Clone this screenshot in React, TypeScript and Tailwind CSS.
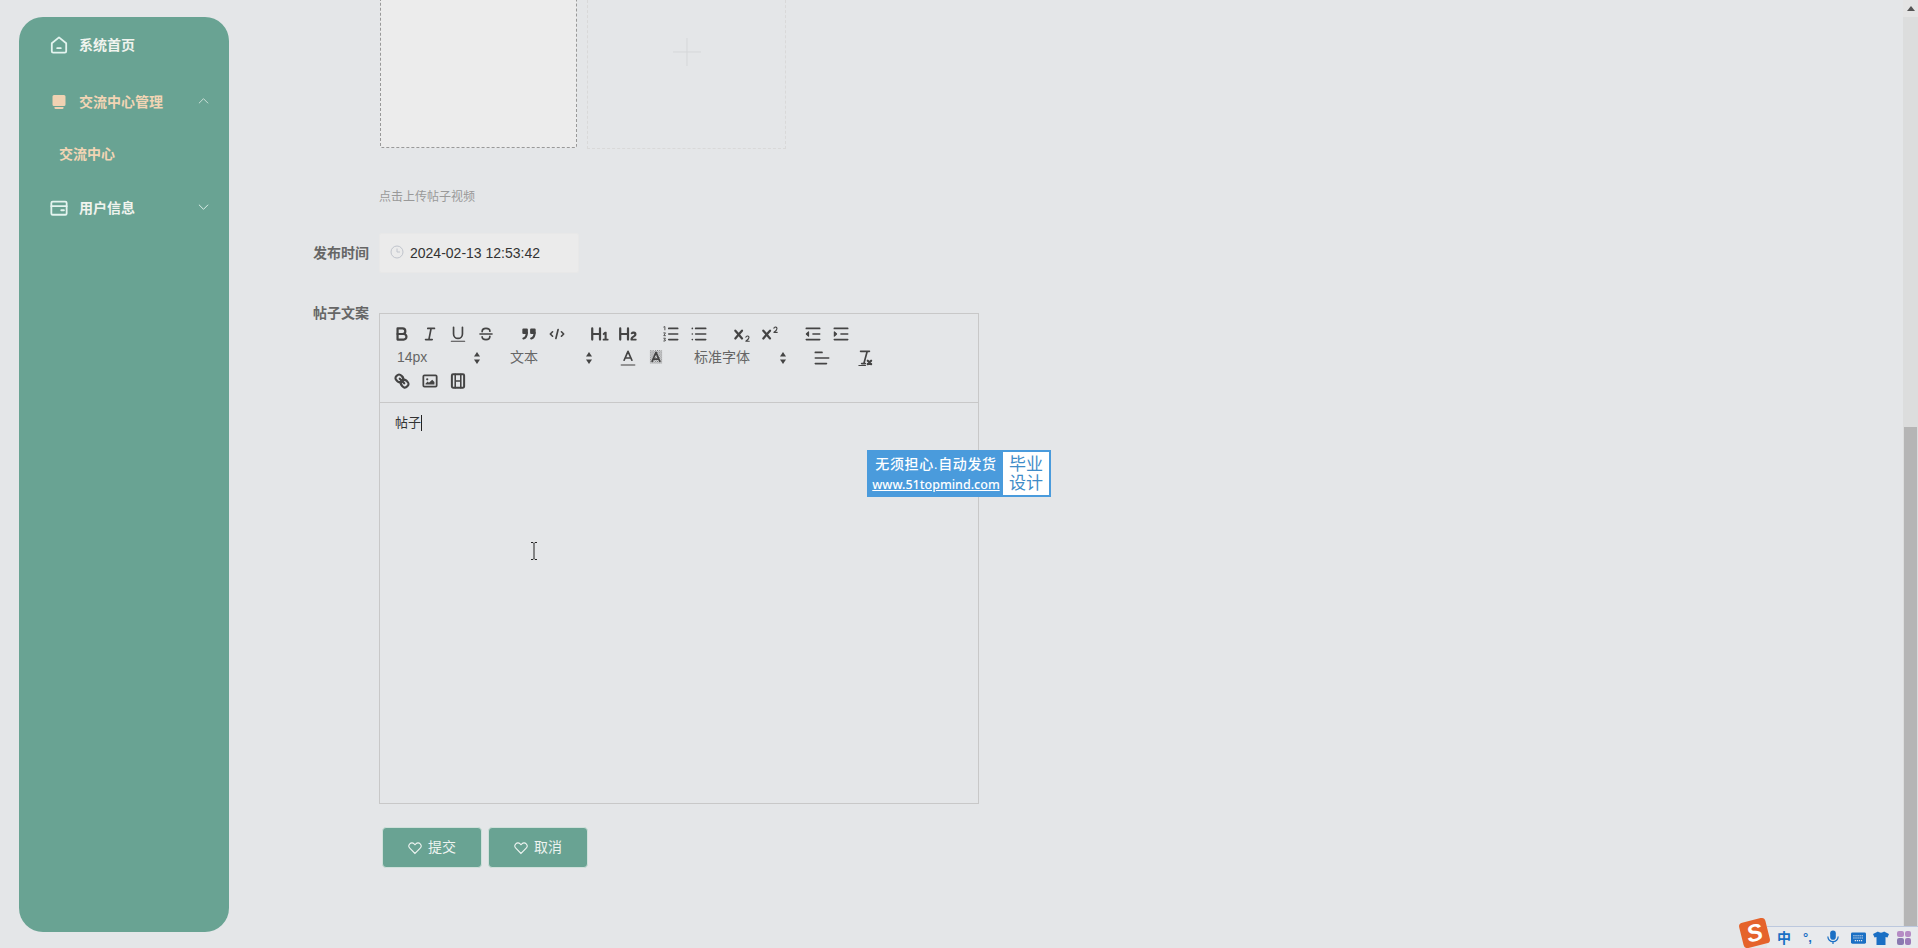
import type { ReactNode } from 'react';

function QlIcon({ children }: { children: ReactNode }) {
    return (
        <span className="w-[28px] h-[24px] flex items-center justify-center shrink-0">
            <svg viewBox="0 0 18 18" className="w-[20px] h-[20px]" fill="none" stroke="#444" strokeWidth="2" strokeLinecap="round" strokeLinejoin="round">
                {children}
            </svg>
        </span>
    );
}

const thin = { strokeWidth: 1.5 };

function ToolbarGroup({ children }: { children: ReactNode }) {
    return <div className="flex mr-[15px]">{children}</div>;
}

function Picker({ label, className }: { label: string; className: string }) {
    return (
        <div className={`flex items-center justify-between h-[24px] text-[14px] text-[#666] ${className}`}>
            <span>{label}</span>
            <svg viewBox="0 0 8 14" className="w-[8px] h-[14px]" fill="#444">
                <path d="M4 1 7 5.500H1Z" />
                <path d="M4 13 1 8.500h6Z" />
            </svg>
        </div>
    );
}

function Toolbar() {
    return (
        <div className="h-[89px] pt-[8px] pl-[8px] border-b border-[#c8c8c8]">
            <div className="flex h-[24.5px]">
                <ToolbarGroup>
                    <QlIcon>
                        <path d="M5,4H9.5A2.5,2.5,0,0,1,12,6.5v0A2.5,2.5,0,0,1,9.5,9H5A0,0,0,0,1,5,9V4A0,0,0,0,1,5,4Z" />
                        <path d="M5,9h5.5A2.5,2.5,0,0,1,13,11.5v0A2.5,2.5,0,0,1,10.5,14H5a0,0,0,0,1,0,0V9A0,0,0,0,1,5,9Z" />
                    </QlIcon>
                    <QlIcon>
                        <path d="M7 4h6M5 14h6M8 14l2-10" {...thin} />
                    </QlIcon>
                    <QlIcon>
                        <path d="M5,3V9a4,4,0,0,0,4,4H9a4,4,0,0,0,4-4V3" {...thin} />
                        <path d="M3 15.500h12" strokeWidth="1" />
                    </QlIcon>
                    <QlIcon>
                        <path d="M3.500 9h11" strokeWidth="1.200" />
                        <path d="M5.500 7C5.500 5 7 4 9 4s3.500 1 3.500 2.500M12.500 11c0 2-1.500 3-3.500 3s-3.500-1-3.500-2.500" {...thin} />
                    </QlIcon>
                </ToolbarGroup>
                <ToolbarGroup>
                    <QlIcon>
                        <rect x="4" y="5" width="3" height="3" fill="#444" />
                        <rect x="11" y="5" width="3" height="3" fill="#444" />
                        <path d="M7,8c0,4.031-3,5-3,5M14,8c0,4.031-3,5-3,5" />
                    </QlIcon>
                    <QlIcon>
                        <path d="M5 7 3 9l2 2M13 7l2 2-2 2M10 5 8 13" {...thin} />
                    </QlIcon>
                </ToolbarGroup>
                <ToolbarGroup>
                    <QlIcon>
                        <path fill="#444" stroke="none" d="M10,4V14a1,1,0,0,1-2,0V10H3v4a1,1,0,0,1-2,0V4A1,1,0,0,1,3,4V8H8V4a1,1,0,0,1,2,0Zm6.06787,9.209H14.98975V7.59863a.54085.54085,0,0,0-.605-.60547h-.62744a1.01119,1.01119,0,0,0-.748.29688L11.645,8.56641a.5435.5435,0,0,0-.022.8584l.28613.30762a.53861.53861,0,0,0,.84717.0332l.09912-.08789a1.2137,1.2137,0,0,0,.2417-.35254h.02246s-.01123.30859-.01123.60547V13.209H12.041a.54085.54085,0,0,0-.605.60547v.43945a.54085.54085,0,0,0,.605.60547h4.02686a.54085.54085,0,0,0,.605-.60547v-.43945A.54085.54085,0,0,0,16.06787,13.209Z" />
                    </QlIcon>
                    <QlIcon>
                        <path fill="#444" stroke="none" d="M16.73975,13.81445v.43945a.54085.54085,0,0,1-.605.60547H11.855a.58392.58392,0,0,1-.64893-.60547V14.0127c0-2.90527,3.39941-3.42187,3.39941-4.55469a.77675.77675,0,0,0-.84717-.78125,1.17684,1.17684,0,0,0-.83594.38477c-.2749.26367-.561.374-.85791.13184l-.4292-.34082c-.30811-.24219-.38525-.51758-.1543-.81445a2.97155,2.97155,0,0,1,2.45361-1.17676,2.45393,2.45393,0,0,1,2.68408,2.40918c0,2.45312-3.1792,2.92676-3.27832,3.93848h2.79443A.54085.54085,0,0,1,16.73975,13.81445ZM9,3A.99974.99974,0,0,0,8,4V8H3V4A1,1,0,0,0,1,4V14a1,1,0,0,0,2,0V10H8v4a1,1,0,0,0,2,0V4A.99974.99974,0,0,0,9,3Z" />
                    </QlIcon>
                </ToolbarGroup>
                <ToolbarGroup>
                    <QlIcon>
                        <path d="M7 4h8M7 9h8M7 14h8" {...thin} />
                        <path d="M2.500 2.700 3.500 2.300v3M2.500 8h1.500L2.500 10.500H4M2.500 12.800H4L3 14l1 .3-.3 1H2.500" strokeWidth="0.8" />
                    </QlIcon>
                    <QlIcon>
                        <path d="M6 4h9M6 9h9M6 14h9M3 4h0M3 9h0M3 14h0" {...thin} />
                    </QlIcon>
                </ToolbarGroup>
                <ToolbarGroup>
                    <QlIcon>
                        <path fill="#444" stroke="none" d="M15.5,15H13.861a3.858,3.858,0,0,0,1.914-2.975,1.8,1.8,0,0,0-1.6-1.751A1.921,1.921,0,0,0,12.021,11.7a0.50013,0.50013,0,1,0,.957.291h0a0.914,0.914,0,0,1,1.053-.725,0.81,0.81,0,0,1,.744.762c0,1.076-1.16971,1.86982-1.93971,2.43082A1.45639,1.45639,0,0,0,12,15.5a0.5,0.5,0,0,0,.5.5h3A0.5,0.5,0,0,0,15.5,15Z" />
                        <path fill="#444" stroke="none" d="M9.65,5.241a1,1,0,0,0-1.409.108L6,7.964,3.759,5.349A1,1,0,0,0,2.192,6.59178Q2.215,6.621,2.241,6.651L4.684,9.5,2.241,12.35A1,1,0,0,0,3.71,13.70722q0.02739-.02972.05-0.058L6,11.036,8.241,13.65a1,1,0,1,0,1.567-1.24277Q9.78255,12.375,9.759,12.35L7.316,9.5,9.759,6.651A1,1,0,0,0,9.65,5.241Z" />
                    </QlIcon>
                    <QlIcon>
                        <path fill="#444" stroke="none" d="M15.5,7H13.861a4.015,4.015,0,0,0,1.914-2.975,1.8,1.8,0,0,0-1.6-1.751A1.922,1.922,0,0,0,12.021,3.7a0.5,0.5,0,1,0,.957.291,0.917,0.917,0,0,1,1.053-.725,0.81,0.81,0,0,1,.744.762c0,1.077-1.164,1.925-1.934,2.486A1.423,1.423,0,0,0,12,7.5a0.5,0.5,0,0,0,.5.5h3A0.5,0.5,0,0,0,15.5,7Z" />
                        <path fill="#444" stroke="none" d="M9.651,5.241a1,1,0,0,0-1.41.108L6,7.964,3.759,5.349a1,1,0,1,0-1.519,1.3L4.683,9.5,2.241,12.35a1,1,0,1,0,1.519,1.3L6,11.036l2.241,2.616a1,1,0,0,0,1.519-1.3L7.317,9.5,9.759,6.651A1,1,0,0,0,9.651,5.241Z" />
                    </QlIcon>
                </ToolbarGroup>
                <ToolbarGroup>
                    <QlIcon>
                        <path d="M3 14h12M3 4h12M9 9h6" {...thin} />
                        <path d="M5 7v4L3 9Z" fill="#444" strokeWidth="1" />
                    </QlIcon>
                    <QlIcon>
                        <path d="M3 14h12M3 4h12M9 9h6" {...thin} />
                        <path d="M3 7v4l2-2Z" fill="#444" strokeWidth="1" />
                    </QlIcon>
                </ToolbarGroup>
            </div>
            <div className="flex h-[24.5px] -mt-px">
                <Picker label="14px" className="w-[101px] pl-[9px] pr-[8px] mr-[9px]" />
                <Picker label="文本" className="w-[101px] pl-[12px] pr-[6px] mr-[15px]" />
                <QlIcon>
                    <path d="M5.500 11 9 3l3.500 8M11.630 9H6.380" {...thin} />
                    <path d="M3 15.300h12" strokeWidth="1.400" stroke="#777" />
                </QlIcon>
                <QlIcon>
                    <defs>
                        <pattern id="hatch" width="2" height="2" patternUnits="userSpaceOnUse">
                            <rect width="0.8" height="0.8" fill="#555" stroke="none" />
                            <rect x="1" y="1" width="0.8" height="0.8" fill="#555" stroke="none" />
                        </pattern>
                    </defs>
                    <rect x="3.500" y="2" width="11" height="12" fill="url(#hatch)" stroke="none" />
                    <path d="M5.500 12 9 4l3.500 8M11.630 10H6.380" {...thin} />
                </QlIcon>
                <Picker label="标准字体" className="w-[110px] ml-[15px] pl-[9px] pr-[8px] mr-[13px]" />
                <QlIcon>
                    <path d="M3 4h6M3 9h12M3 14h10" {...thin} />
                </QlIcon>
                <div className="w-[15px]" />
                <QlIcon>
                    <path d="M5 3h8M6 14h3.300M11 3 8 14" {...thin} />
                    <path d="M3.500 15.800h6" strokeWidth="1" />
                    <path d="M11.500 11.500l3 3M14.500 11.500l-3 3" />
                </QlIcon>
            </div>
            <div className="flex h-[24.5px] -mt-px">
                <QlIcon>
                    <path d="M7 7l4 4" />
                    <path d="M8.9,4.577a3.476,3.476,0,0,1,.36,4.679A3.476,3.476,0,0,1,4.577,8.9C3.185,7.5,2.035,6.4,4.217,4.217S7.5,3.185,8.9,4.577Z" />
                    <path d="M13.423,9.1a3.476,3.476,0,0,0-4.679-.36,3.476,3.476,0,0,0,.36,4.679c1.392,1.392,2.5,2.542,4.679.36S14.815,10.5,13.423,9.1Z" />
                </QlIcon>
                <QlIcon>
                    <rect x="3" y="4" width="12" height="10" rx="1" strokeWidth="1.600" />
                    <circle cx="6.500" cy="7.500" r="1" fill="#444" stroke="none" />
                    <path d="M5 12.200v-1l2-1.700 1 1 3-2.700 2 2v2.400Z" fill="#444" stroke="none" />
                </QlIcon>
                <QlIcon>
                    <rect x="3.500" y="3" width="11" height="12" rx="1" strokeWidth="1.800" />
                    <path d="M6.500 3v12M11.500 3v12M6.500 9h5" strokeWidth="1.400" />
                </QlIcon>
            </div>
        </div>
    );
}

function Sidebar() {
    return (
        <aside className="w-[210px] h-[915px] ml-[19px] mt-[17px] rounded-[24px] bg-[#69a393] shrink-0 text-[14px] font-bold">
            <div className="h-[56px] pl-[31px] flex items-center text-[#f0f3ee]">
                <svg viewBox="0 0 20 20" className="w-[18px] h-[18px] mr-[11px]" fill="none" stroke="#e4f4ef" strokeWidth="2" strokeLinejoin="round" strokeLinecap="round">
                    <path d="M2 8 10 1.500 18 8v9a1.500 1.500 0 0 1-1.500 1.500h-13A1.500 1.500 0 0 1 2 17Z" />
                    <path d="M8 13.500h4" />
                </svg>
                系统首页
            </div>
            <div className="h-[58px] pl-[31px] pr-[20px] flex items-center text-[#f2d5b5]">
                <svg viewBox="0 0 18 18" className="w-[18px] h-[18px] mr-[11px]" fill="#f0d2b2">
                    <path d="M4 2h10a1.500 1.500 0 0 1 1.500 1.500v8A1.500 1.500 0 0 1 14 13H4A1.500 1.500 0 0 1 2.500 11.500v-8A1.500 1.500 0 0 1 4 2Z" />
                    <path d="M4.500 14h9v1a1 1 0 0 1-1 1h-7a1 1 0 0 1-1-1Z" />
                </svg>
                <span className="flex-1">交流中心管理</span>
                <svg viewBox="0 0 12 8" className="w-[11px] h-[8px] -mt-[3px]" fill="none" stroke="#d5e5dd" strokeWidth="1">
                    <path d="M1 6.500 6 1.500l5 5" />
                </svg>
            </div>
            <div className="h-[46px] pl-[40px] flex items-center text-[#f2d5b5]">交流中心</div>
            <div className="h-[62px] pl-[31px] pr-[20px] flex items-center text-[#f0f3ee]">
                <svg viewBox="0 0 20 20" className="w-[18px] h-[18px] mr-[11px]" fill="none" stroke="#e4f4ef" strokeWidth="2" strokeLinecap="round">
                    <rect x="1.500" y="3" width="17" height="14.500" rx="1.500" />
                    <path d="M1.500 8h17M12.500 12.500h3" />
                </svg>
                <span className="flex-1">用户信息</span>
                <svg viewBox="0 0 12 8" className="w-[11px] h-[8px] -mt-[3px]" fill="none" stroke="#e4f4ef" strokeWidth="1">
                    <path d="M1 1.500 6 6.500l5-5" />
                </svg>
            </div>
        </aside>
    );
}

function SubmitButton({ label }: { label: string }) {
    return (
        <button className="w-[100px] h-[41px] rounded-[4px] bg-[#69a393] border border-[#cfe0da] text-[14px] text-[#edf3f0] flex items-center justify-center gap-[6px]">
            <svg viewBox="0 0 14 14" className="w-[14px] h-[14px]" fill="none" stroke="#edf3f0" strokeWidth="1.100">
                <path d="M7 12.500 1.800 7.200a3.200 3.200 0 0 1 0-4.400 3 3 0 0 1 4.300 0l.9.9.9-.9a3 3 0 0 1 4.300 0 3.200 3.200 0 0 1 0 4.400Z" />
            </svg>
            {label}
        </button>
    );
}

function ImeBar() {
    return (
        <div className="absolute right-0 bottom-0 w-[151px] h-[22px] bg-[#e8eaed] border-t border-[#bcc8de] flex items-center text-[#1a6fc4]">
            <div className="absolute -left-[26px] -top-[7px] w-[27px] h-[26px] rounded-[4px] bg-[#e5632b] rotate-[-14deg] flex items-center justify-center text-white text-[24px] leading-none font-bold italic">
                S
            </div>
            <span className="ml-[10px] w-[14px] text-[14px] font-bold leading-none">中</span>
            <span className="ml-[12px] w-[14px] text-[13px] font-bold leading-none">°,</span>
            <svg viewBox="0 0 14 16" className="ml-[9px] w-[14px] h-[15px]" fill="#1a6fc4">
                <rect x="4" y="0.500" width="6" height="10" rx="3" />
                <path d="M1.500 7a5.500 5.500 0 0 0 11 0M7 12.500V15" fill="none" stroke="#1a6fc4" strokeWidth="1.300" />
            </svg>
            <svg viewBox="0 0 16 12" className="ml-[11px] w-[15px] h-[12px]">
                <rect width="16" height="12" rx="1.500" fill="#1a6fc4" />
                <path d="M2.500 3.500h11M2.500 6h11M4 8.800h8" stroke="#e8eaed" strokeWidth="1.100" strokeDasharray="1.300 0.900" />
            </svg>
            <svg viewBox="0 0 16 14" className="ml-[7px] w-[16px] h-[14px]" fill="#1a6fc4">
                <path d="M5 0.500 0 3l1.500 3.500L3.500 6V14h9V6l2 .5L16 3 11 .5C10 2 6 2 5 .5Z" />
            </svg>
            <div className="ml-[8px] w-[14px] h-[14px] grid grid-cols-2 gap-[1px]">
                <span className="rounded-[2px] bg-[#b58bc4]" />
                <span className="rounded-[2px] bg-[#b58bc4]" />
                <span className="rounded-[2px] bg-[#8a7ab0]" />
                <span className="rounded-[2px] bg-[#9b7bb8]" />
            </div>
        </div>
    );
}

export default function App() {
    return (
        <div className="relative flex h-[948px] overflow-hidden bg-[#e4e6e8] font-['Liberation_Sans','Noto_Sans_CJK_SC',sans-serif]">
            <Sidebar />

            <main className="flex-1">
                <div className="pl-[151px] flex gap-[10px]">
                    <div className="w-[197px] h-[148px] bg-[#ececec] border border-t-0 border-dashed border-[#999] rounded-b-[2px]" />
                    <div className="w-[199px] h-[149px] border border-t-0 border-dashed border-[#d9d9d9] flex items-center justify-center">
                        <svg viewBox="0 0 28 28" className="w-[28px] h-[28px] -mt-[44px]" stroke="#d5d7d9" strokeWidth="1">
                            <path d="M14 0v28M0 14h28" />
                        </svg>
                    </div>
                </div>

                <p className="pl-[150px] mt-[39px] h-[18px] text-[12px] leading-[18px] text-[#999]">点击上传帖子视频</p>

                <div className="mt-[27px] flex items-center">
                    <label className="w-[140px] text-right text-[14px] font-bold text-[#666]">发布时间</label>
                    <div className="ml-[10px] w-[200px] h-[40px] bg-[#ebebeb] border border-[#e8e8e8] rounded-[2px] flex items-center pl-[10px]">
                        <svg viewBox="0 0 14 14" className="w-[14px] h-[14px] -mt-[2px]" fill="none" stroke="#c0c4cc" strokeWidth="1">
                            <circle cx="7" cy="7" r="6" />
                            <path d="M7 3.500V7h3" />
                        </svg>
                        <span className="ml-[6px] text-[14px] text-[#333]">2024-02-13 12:53:42</span>
                    </div>
                </div>

                <div className="mt-[40px] flex items-start">
                    <label className="w-[140px] mt-[-10px] leading-[20px] text-right text-[14px] font-bold text-[#666]">帖子文案</label>
                    <div className="ml-[10px] w-[600px] h-[491px] border border-[#c8c8c8]">
                        <Toolbar />
                        <div className="pt-[11px] pl-[15px] text-[13px] leading-[18px] text-[#333] flex items-center">
                            帖子
                            <span className="w-px h-[16px] bg-[#222]" />
                        </div>
                    </div>
                </div>

                <div className="mt-[23px] pl-[153px] flex gap-[6px]">
                    <SubmitButton label="提交" />
                    <SubmitButton label="取消" />
                </div>
            </main>

            <div className="w-[15px] h-full bg-[#dcdddd] flex flex-col shrink-0">
                <div className="h-[17px] bg-[#e4e4e4] flex items-center justify-center">
                    <svg viewBox="0 0 8 5" className="w-[8px] h-[5px]" fill="#555">
                        <path d="M4 0 8 5H0Z" />
                    </svg>
                </div>
                <div className="flex-1" />
                <div className="h-[521px] mx-px bg-[#b5b5b5]" />
            </div>

            {/* stuff floating over the page */}
            <div className="absolute left-[867px] top-[450px] w-[184px] h-[47px] bg-[#4a9bdc] border-2 border-[#4a9bdc] flex text-white">
                <div className="flex-1 flex flex-col items-center justify-center">
                    <span className="text-[14px] leading-[20px] tracking-[0.6px] font-medium">无须担心.自动发货</span>
                    <span className="text-[12.5px] leading-[19px] mt-px font-['Noto_Sans',sans-serif] font-medium underline">www.51topmind.com</span>
                </div>
                <div className="w-[46px] bg-white text-[#3f8cc8] text-[17px] leading-[19px] text-center flex items-center justify-center">
                    毕业<br />设计
                </div>
            </div>

            <svg viewBox="0 0 8 18" className="absolute left-[530px] top-[542px] w-[8px] h-[18px]" fill="none" stroke="#222" strokeWidth="1">
                <path d="M1 .5h2l1 1 1-1h2M4 1.500v15M1 17.500h2l1-1 1 1h2" />
            </svg>

            <ImeBar />
        </div>
    );
}
